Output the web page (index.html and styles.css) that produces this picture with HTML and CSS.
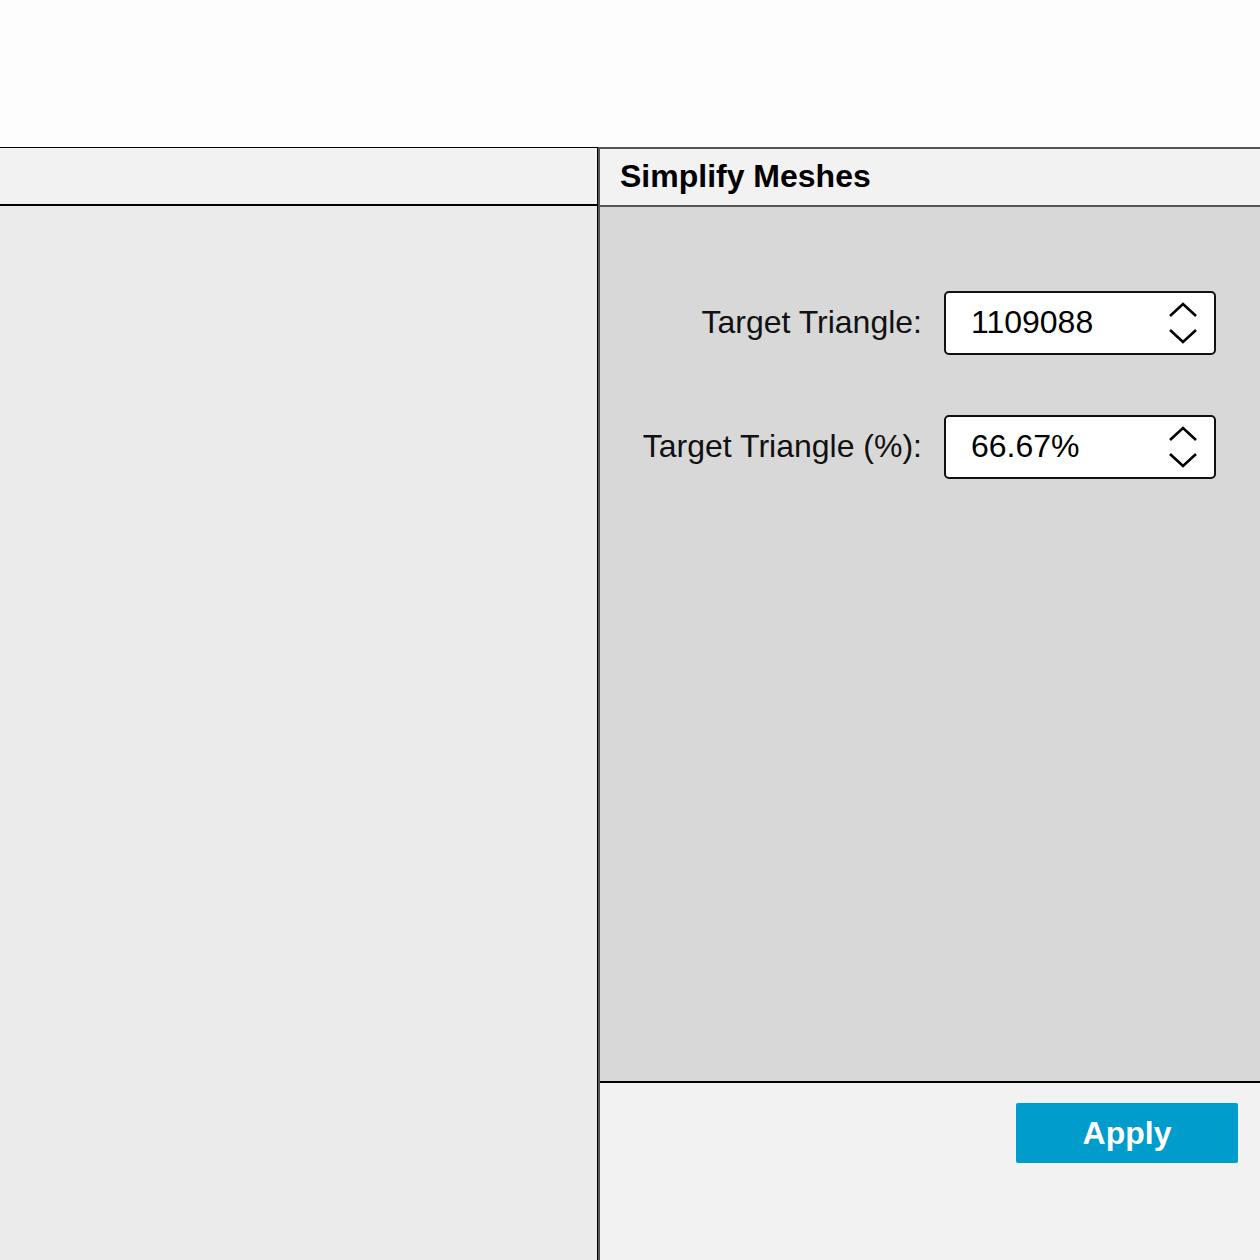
FILE: index.html
```html
<!DOCTYPE html>
<html>
<head>
<meta charset="utf-8">
<link rel="stylesheet" href="styles.css">
</head>
<body>
<div class="topbar"></div>
<div class="main">
  <div class="left">
    <div class="left-header"></div>
    <div class="left-body"></div>
  </div>
  <div class="right">
    <div class="right-header">Simplify Meshes</div>
    <div class="right-body">
      <div class="row">
        <label class="label">Target Triangle:</label>
        <div class="spin">
          <span class="value">1109088</span>
          <svg class="arrows" width="30" height="44" viewBox="0 0 30 44">
            <polyline points="2,14 15,2 28,14" fill="none" stroke="#000" stroke-width="2.6"/>
            <polyline points="2,28 15,40 28,28" fill="none" stroke="#000" stroke-width="2.6"/>
          </svg>
        </div>
      </div>
      <div class="row">
        <label class="label">Target Triangle (%):</label>
        <div class="spin">
          <span class="value">66.67%</span>
          <svg class="arrows" width="30" height="44" viewBox="0 0 30 44">
            <polyline points="2,14 15,2 28,14" fill="none" stroke="#000" stroke-width="2.6"/>
            <polyline points="2,28 15,40 28,28" fill="none" stroke="#000" stroke-width="2.6"/>
          </svg>
        </div>
      </div>
    </div>
    <div class="right-footer">
      <button class="apply">Apply</button>
    </div>
  </div>
</div>
</body>
</html>
```
FILE: styles.css
```css
html, body {
  margin: 0;
  padding: 0;
}
body {
  background: #fdfdfd;
  font-family: "Liberation Sans", Arial, Helvetica, sans-serif;
  color: #000;
  width: 1260px;
  height: 1260px;
  overflow: hidden;
}
.topbar {
  height: 147px;
  background: #fdfdfd;
}
.main {
  display: flex;
  height: 1113px;
}
.left {
  width: 597px;
  border-right: 1px solid #000;
  display: flex;
  flex-direction: column;
}
.left-header {
  height: 56px;
  background: #f2f2f2;
  border-top: 1px solid #000;
  border-bottom: 2px solid #000;
}
.left-body {
  flex: 1;
  background: #ebebeb;
}
.right {
  flex: 1;
  border-left: 2px solid #555;
  display: flex;
  flex-direction: column;
}
.right-header {
  height: 56px;
  background: #f2f2f2;
  border-top: 2px solid #555;
  border-bottom: 2px solid #555;
  font-weight: bold;
  font-size: 32px;
  line-height: 54px;
  padding-left: 20px;
}
.right-body {
  height: 874px;
  background: #d8d8d8;
  padding-top: 84px;
  box-sizing: border-box;
  display: flex;
  flex-direction: column;
  gap: 60px;
}
.row {
  display: flex;
  align-items: center;
  justify-content: flex-end;
  padding-right: 44px;
  gap: 22px;
}
.label {
  font-size: 32px;
  color: #111;
  margin-top: -2px;
}
.spin {
  width: 272px;
  height: 64px;
  box-sizing: border-box;
  border: 2px solid #111;
  border-radius: 5px;
  background: #fff;
  display: flex;
  align-items: center;
  justify-content: space-between;
  padding-left: 25px;
  padding-right: 16px;
}
.value {
  font-size: 32px;
  margin-top: -2px;
}
.arrows {
  display: block;
  margin-top: 2px;
}
.right-footer {
  flex: 1;
  background: #f2f2f2;
  border-top: 2px solid #000;
  display: flex;
  justify-content: flex-end;
  align-items: flex-start;
  padding: 20px 22px 0 0;
}
.apply {
  width: 222px;
  height: 60px;
  background: #009ccc;
  color: #fff;
  border: none;
  border-radius: 2px;
  font-family: "Liberation Sans", Arial, sans-serif;
  font-weight: bold;
  font-size: 32px;
  padding: 0;
  margin: 0;
}
```
